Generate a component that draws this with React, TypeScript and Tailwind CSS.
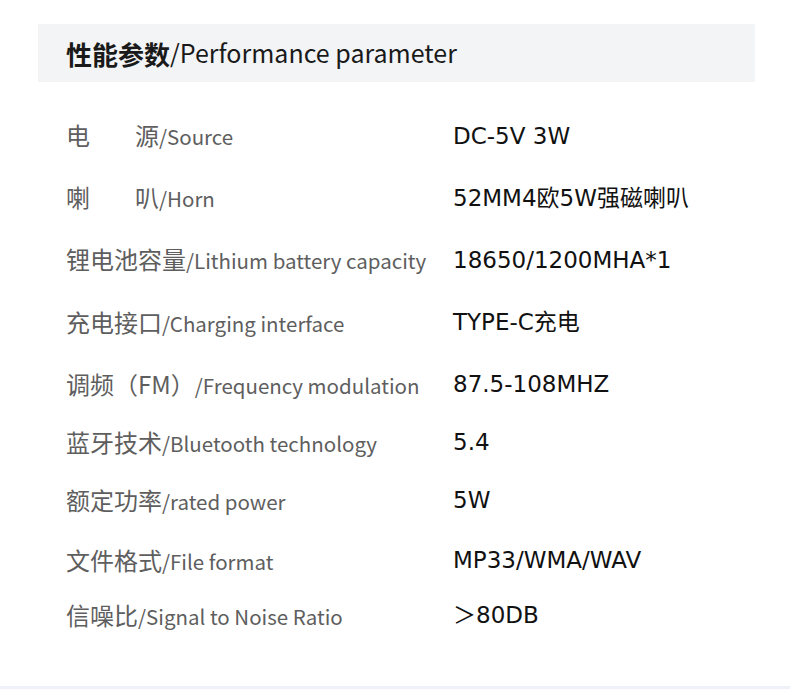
const specs = [
  { cn: "电", cn2: "源", en: "/Source", value: "DC-5V 3W", h: "h-[62px]" },
  { cn: "喇", cn2: "叭", en: "/Horn", value: "52MM4欧5W强磁喇叭", h: "h-[62px]" },
  { cn: "锂电池容量", en: "/Lithium battery capacity", value: "18650/1200MHA*1", h: "h-[62px]" },
  { cn: "充电接口", en: "/Charging interface", value: "TYPE-C充电", h: "h-[63px]" },
  { cn: "调频（FM）", en: "/Frequency modulation", value: "87.5-108MHZ", h: "h-[61px]" },
  { cn: "蓝牙技术", en: "/Bluetooth technology", value: "5.4", h: "h-[55px]" },
  { cn: "额定功率", en: "/rated power", value: "5W", h: "h-[61px]" },
  { cn: "文件格式", en: "/File format", value: "MP33/WMA/WAV", h: "h-[59px]" },
  { cn: "信噪比", en: "/Signal to Noise Ratio", value: "＞80DB", h: "h-[51px]" },
];

const App = () => {
  return (
    <div
      className="w-[790px] h-[689px] bg-white relative overflow-hidden"
      style={{ fontFamily: '"Noto Sans CJK SC", "Noto Sans", sans-serif' }}
    >
      <div className="pt-[24px] pl-[38px]">
        <div className="w-[717px] h-[58px] bg-[#f3f4f6] flex items-center pl-[28px] text-[#1a1a1a]">
          <span className="font-bold text-[26px]">性能参数</span>
          <span className="text-[25px]">/Performance parameter</span>
        </div>
      </div>

      <div className="mt-[22px] pl-[66px]">
        {specs.map((row, i) => (
          <div key={i} className={`${row.h} flex items-center`}>
            <div className="w-[387px] text-[#5e5e5e] text-[24px] flex items-baseline whitespace-nowrap">
              {row.cn2 ? (
                <>
                  <span className="inline-block w-[69px]">{row.cn}</span>
                  <span>{row.cn2}</span>
                </>
              ) : (
                <span>{row.cn}</span>
              )}
              <span className="text-[20.5px]">{row.en}</span>
            </div>
            <div
              className="text-[23px] text-[#111111] whitespace-nowrap mt-[2px]"
              style={{ fontFamily: '"DejaVu Sans", "Noto Sans CJK SC", sans-serif' }}
            >
              {row.value}
            </div>
          </div>
        ))}
      </div>

      <div className="absolute left-0 right-0 bottom-0 h-[3px] bg-[#eef2f8]" />
    </div>
  );
};

export default App;
